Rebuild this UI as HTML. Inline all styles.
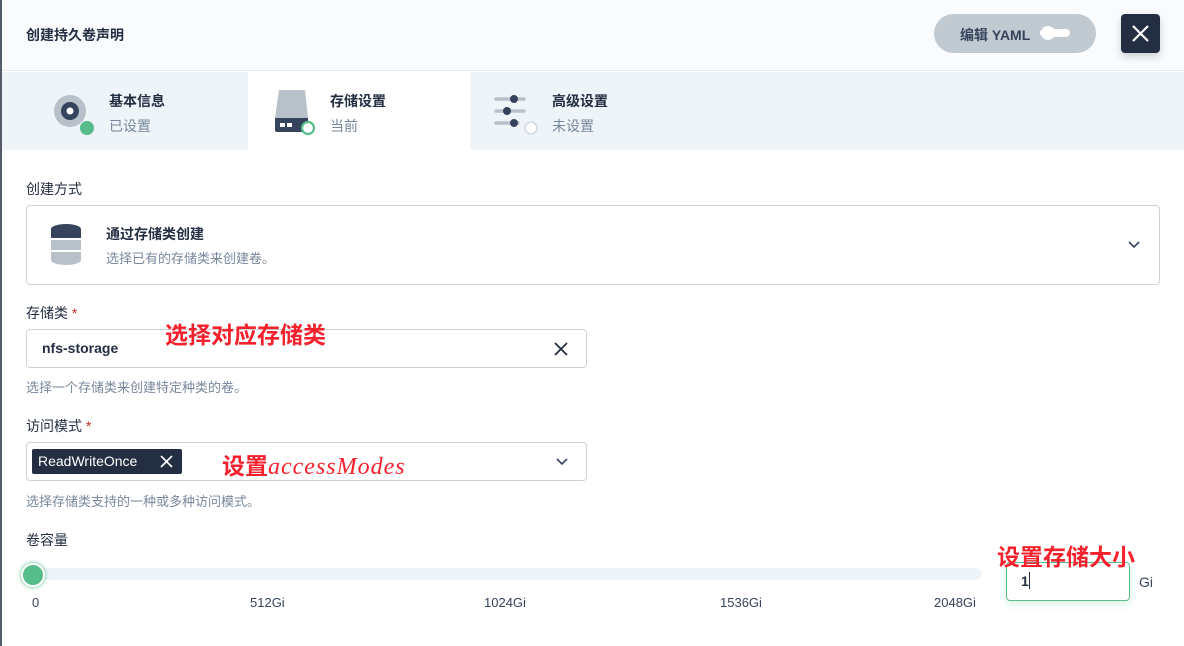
<!DOCTYPE html>
<html><head><meta charset="utf-8"><style>
*{box-sizing:border-box;margin:0;padding:0}
body{width:1184px;height:646px;overflow:hidden;background:#fff;font-family:"Liberation Sans","Noto Sans CJK SC",sans-serif;color:#242e42;position:relative;font-size:14px}
.abs{position:absolute}
.lb{left:0;top:0;width:2px;height:646px;background:#555d6b}
.hdr{left:2px;top:0;width:1182px;height:71px;background:#f9fbfd;border-bottom:1px solid #e3e9ef}
.tabs{left:2px;top:72px;width:1182px;height:78px;background:#eff4f9}
.t{font-weight:bold;font-size:14px}
.s{color:#79879c;font-size:14px}
.box{border:1px solid #ccd3db;border-radius:4px;background:#fff}
.red{color:#f5222d;font-weight:bold;z-index:5}
.lbl{font-size:14px;color:#242e42}
.help{font-size:13px;color:#79879c}
.tk{font-size:13px;color:#36435c}
</style></head><body>
<div class="abs lb"></div>
<div class="abs hdr"></div>
<div class="abs t" style="left:26px;top:25px;font-size:14px">创建持久卷声明</div>
<div class="abs" style="left:934px;top:14px;width:162px;height:39px;border-radius:20px;background:#c1c9d1"></div>
<div class="abs t" style="left:960px;top:25px;color:#36435c">编辑 YAML</div>
<div class="abs" style="left:1040px;top:29px;width:30px;height:8px;border-radius:4px;background:#fff"></div>
<div class="abs" style="left:1041px;top:26px;width:14px;height:14px;border-radius:7px;background:#fff"></div>
<div class="abs" style="left:1121px;top:14px;width:39px;height:39px;border-radius:4px;background:#242e42;box-shadow:0 4px 8px rgba(36,46,66,.2)"></div>
<svg class="abs" style="left:1121px;top:14px" width="39" height="39"><path d="M12 12L27 27M27 12L12 27" stroke="#fff" stroke-width="2.2"/></svg>
<div class="abs tabs"></div>
<div class="abs" style="left:248px;top:72px;width:222px;height:78px;background:#fff"></div>
<svg class="abs" style="left:40px;top:88px" width="60" height="50"><circle cx="30" cy="23" r="16" fill="#b8c1ca"/><circle cx="30" cy="23" r="9" fill="#36435c"/><circle cx="30" cy="23" r="3.5" fill="#fff"/><circle cx="47" cy="40" r="7" fill="#55bc8a"/></svg>
<div class="abs t" style="left:109px;top:91px">基本信息</div><div class="abs s" style="left:109px;top:116px">已设置</div>
<svg class="abs" style="left:270px;top:86px" width="50" height="52"><path d="M9 4H35L38 32H5Z" fill="#b8c1ca"/><path d="M5 32H38V44A2 2 0 0 1 36 46H7A2 2 0 0 1 5 44Z" fill="#36435c"/><rect x="10" y="37" width="5" height="4" fill="#fff"/><rect x="17" y="37" width="5" height="4" fill="#fff"/><circle cx="38" cy="42" r="6" fill="#fff" stroke="#55bc8a" stroke-width="2.2"/></svg>
<div class="abs t" style="left:330px;top:91px">存储设置</div><div class="abs s" style="left:330px;top:116px">当前</div>
<svg class="abs" style="left:490px;top:88px" width="50" height="50"><g stroke="#b8c1ca" stroke-width="3.5" stroke-linecap="round"><path d="M6 11H34M6 23H34M6 35H28"/></g><circle cx="24" cy="11" r="4" fill="#36435c"/><circle cx="17" cy="23" r="4" fill="#36435c"/><circle cx="24" cy="35" r="4" fill="#36435c"/><circle cx="41" cy="40" r="6" fill="#fff" stroke="#d8dee5" stroke-width="2"/></svg>
<div class="abs t" style="left:552px;top:91px">高级设置</div><div class="abs s" style="left:552px;top:116px">未设置</div>

<div class="abs lbl" style="left:26px;top:179px">创建方式</div>
<div class="abs box" style="left:26px;top:205px;width:1134px;height:80px"></div>
<svg class="abs" style="left:50px;top:222px" width="32" height="44"><ellipse cx="16" cy="7" rx="15" ry="5" fill="#36435c"/><rect x="1" y="7" width="30" height="9" fill="#36435c"/><rect x="1" y="18" width="30" height="10" fill="#b8c1ca"/><path d="M1 30H31V38A15 5 0 0 1 1 38Z" fill="#b8c1ca"/></svg>
<div class="abs t" style="left:106px;top:224px">通过存储类创建</div>
<div class="abs s" style="left:106px;top:248px;font-size:13px">选择已有的存储类来创建卷。</div>
<svg class="abs" style="left:1127px;top:238px" width="14" height="14"><path d="M2 4L7 9L12 4" stroke="#36435c" stroke-width="1.6" fill="none"/></svg>

<div class="abs lbl" style="left:26px;top:303px">存储类 <span style="color:#ca2621">*</span></div>
<div class="abs box" style="left:26px;top:329px;width:561px;height:39px"></div>
<div class="abs red" style="left:165px;top:316px;font-size:23px">选择对应存储类</div>
<div class="abs t" style="left:42px;top:340px">nfs-storage</div>
<svg class="abs" style="left:553px;top:341px" width="16" height="16"><path d="M2 2L14 14M14 2L2 14" stroke="#242e42" stroke-width="1.8"/></svg>
<div class="abs help" style="left:26px;top:377px">选择一个存储类来创建特定种类的卷。</div>

<div class="abs lbl" style="left:26px;top:416px">访问模式 <span style="color:#ca2621">*</span></div>
<div class="abs box" style="left:26px;top:442px;width:561px;height:39px"></div>
<div class="abs" style="left:32px;top:449px;width:150px;height:25px;background:#242e42;border-radius:2px"></div>
<div class="abs" style="left:38px;top:453px;color:#fff;font-size:14px">ReadWriteOnce</div>
<svg class="abs" style="left:159px;top:454px" width="16" height="16"><path d="M2 2L13 13M13 2L2 13" stroke="#fff" stroke-width="1.6"/></svg>
<div class="abs red" style="left:222px;top:447px;font-size:23px">设置<span style="font-family:'Liberation Serif',serif;font-style:italic;font-weight:normal;font-size:24px;letter-spacing:1px">accessModes</span></div>
<svg class="abs" style="left:555px;top:455px" width="14" height="14"><path d="M2 4L7 9L12 4" stroke="#36435c" stroke-width="1.6" fill="none"/></svg>
<div class="abs help" style="left:26px;top:491px">选择存储类支持的一种或多种访问模式。</div>

<div class="abs lbl" style="left:26px;top:530px">卷容量</div>
<div class="abs" style="left:26px;top:568px;width:956px;height:12px;background:#eff4f9;border-radius:6px"></div>
<div class="abs" style="left:21px;top:563px;width:24px;height:24px;border-radius:12px;background:#55bc8a;border:2px solid #fff;box-shadow:0 0 4px #55bc8a"></div>
<div class="abs tk" style="left:32px;top:595px">0</div>
<div class="abs tk" style="left:250px;top:595px">512Gi</div>
<div class="abs tk" style="left:484px;top:595px">1024Gi</div>
<div class="abs tk" style="left:720px;top:595px">1536Gi</div>
<div class="abs tk" style="left:934px;top:595px">2048Gi</div>
<div class="abs" style="left:1006px;top:562px;width:124px;height:39px;border:1px solid #55bc8a;border-radius:4px;box-shadow:0 4px 8px rgba(85,188,138,.2)"></div>
<div class="abs t" style="left:1021px;top:573px">1</div>
<div class="abs" style="left:1029px;top:572px;width:1px;height:17px;background:#242e42"></div>
<div class="abs tk" style="left:1139px;top:574px;font-size:14px">Gi</div>
<div class="abs red" style="left:997px;top:538px;font-size:23px">设置存储大小</div>
</body></html>
